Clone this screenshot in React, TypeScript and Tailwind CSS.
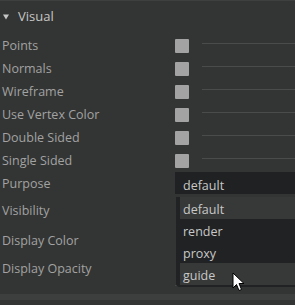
const checks = ["Points", "Normals", "Wireframe", "Use Vertex Color", "Double Sided", "Single Sided"];
const options = ["default", "render", "proxy", "guide"];

function Cursor() {
  return (
    <svg width="14" height="21" viewBox="0 0 14 21" className="absolute left-[232px] top-[272px]">
      <path
        d="M1 1 L1 16 L4.5 12.5 L7 18.5 L9.5 17.5 L7 11.5 L12 11.5 Z"
        fill="#ffffff"
        stroke="#000000"
        strokeWidth="1"
        strokeLinejoin="round"
      />
    </svg>
  );
}

export default function App() {
  return (
    <div
      className="relative w-[295px] h-[305px] overflow-hidden bg-[#333534] text-[12.5px]"
      style={{ fontFamily: '"Open Sans", "Noto Sans", sans-serif' }}
    >
      {/* header */}
      <div className="h-px bg-[#3e403f]" />
      <div className="flex items-center h-[33px] pl-[3px] text-[#c6c6c6]">
        <svg width="6" height="6" viewBox="0 0 6 6" className="mr-[9px] mt-[-2px]">
          <path d="M0 0.5 L6 0.5 L3 5.5 Z" fill="#c6c6c6" />
        </svg>
        <span className="mt-[-1px] text-[13px]">Visual</span>
      </div>

      {/* checkbox rows */}
      {checks.map((c) => (
        <div key={c} className="flex items-center h-[23px]">
          <span className="w-[175px] pl-[2px] text-[#a2a2a2] mt-[1px]">{c}</span>
          <div className="w-[14px] h-[14px] rounded-[1px] bg-[#a3a3a3]" />
          <div className="flex-1 ml-[13px] h-px bg-[#4a4c4b] mt-[-4px]" />
        </div>
      ))}

      {/* purpose */}
      <div className="flex items-center h-[23px]">
        <span className="w-[175px] pl-[2px] text-[#a2a2a2] mt-[1px]">Purpose</span>
        <div className="flex-1 h-[22px] bg-[#1f2122] flex items-center pl-[8px] text-[#c8c8c8] mt-[-1px]">
          <span className="mt-[6px]">default</span>
        </div>
      </div>

      <div className="flex items-center h-[29px]">
        <span className="pl-[2px] text-[#a2a2a2] mt-[4px]">Visibility</span>
      </div>
      <div className="flex items-center h-[29px]">
        <span className="pl-[2px] text-[#a2a2a2] mt-[5px]">Display Color</span>
      </div>
      <div className="flex items-center h-[29px]">
        <span className="pl-[2px] text-[#a2a2a2] mt-[3px]">Display Opacity</span>
      </div>
      <div className="flex h-[12px]">
        <div className="w-[175px]" />
        <div className="flex-1 h-px mt-[3px] bg-[#454746]" />
      </div>
      <div className="h-[6px] bg-[#3d3f3e]" />

      {/* popup menu */}
      <div className="absolute left-[176px] top-[197px] w-[130px] h-[90px] bg-[#202223] rounded-bl-[4px] flex flex-col pl-[4px]">
        {options.map((o, i) => (
          <div
            key={o}
            className={
              i === 0 || i === 3
                ? "h-[22px] flex items-center pl-[3px] bg-[#373938] text-[#c8c8c8]"
                : "h-[22px] flex items-center pl-[3px] text-[#c8c8c8]"
            }
          >
            <span className="mt-[5px]">{o}</span>
          </div>
        ))}
      </div>

      <Cursor />
    </div>
  );
}
